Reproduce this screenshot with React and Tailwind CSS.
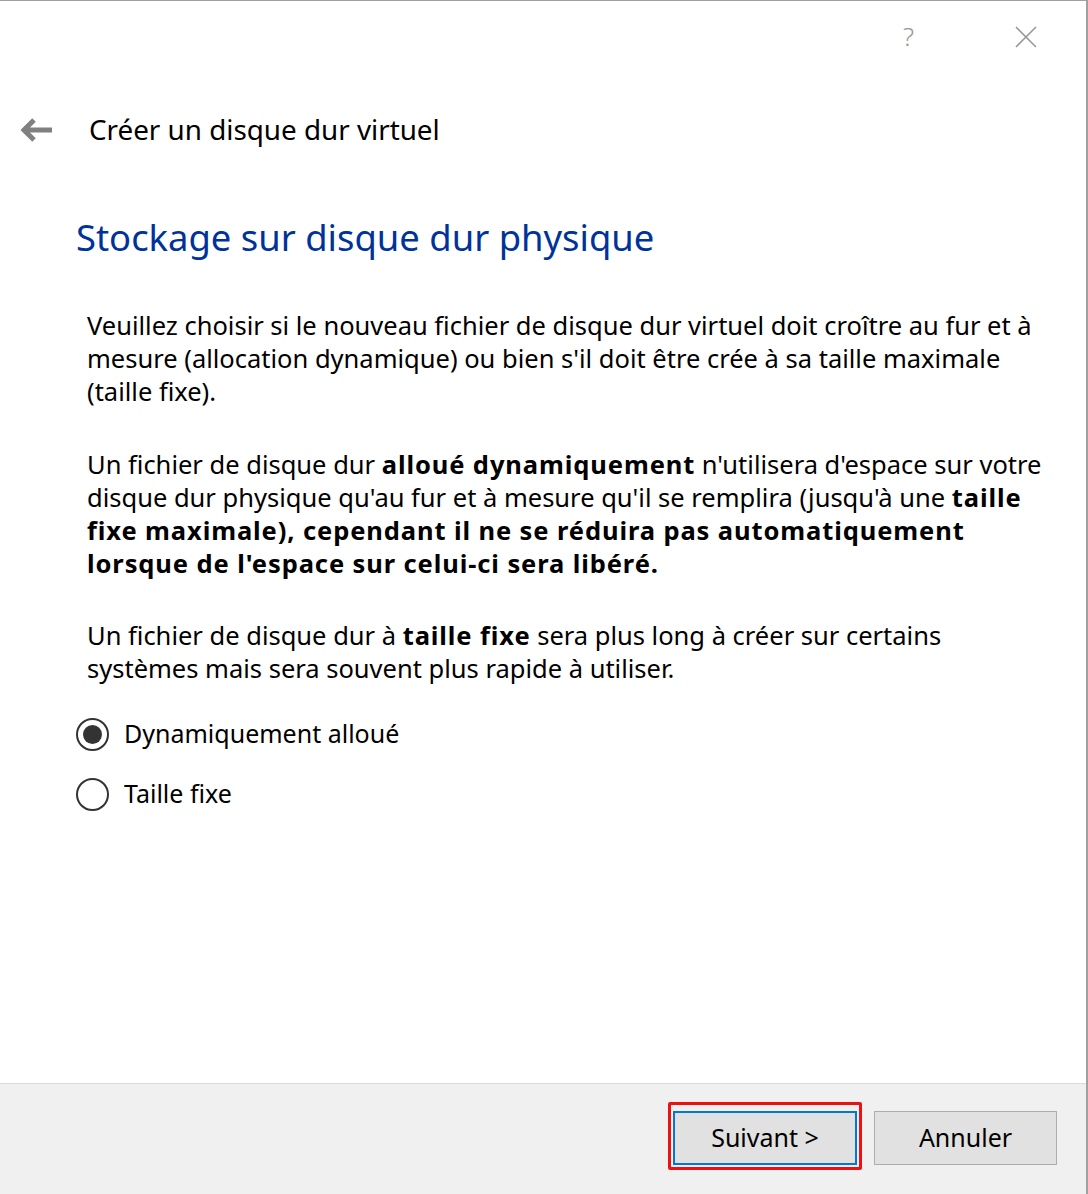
import React, { useState } from 'react';

const font = { fontFamily: '"Noto Sans", "Open Sans", sans-serif' };

function Radio({ checked, label, onSelect }) {
    return (
        <button onClick={onSelect} className="h-[60px] flex items-center gap-[15px] text-left">
            <span className="w-[33px] h-[33px] rounded-full border-2 border-[#333333] flex items-center justify-center bg-white">
                {checked && <span className="w-[19px] h-[19px] rounded-full bg-[#333333]" />}
            </span>
            <span className="text-[25px] text-black">{label}</span>
        </button>
    );
}

export default function App() {
    const [mode, setMode] = useState('dyn');
    const bold = 'font-bold tracking-[0.9px]';

    return (
        <div style={font} className="w-[1088px] h-[1194px] flex flex-col bg-white border-t border-[#a0a0a0] border-r-2 border-r-[#a0a0a0]">

            {/* barre de titre */}
            <div className="h-[71px] flex items-center justify-end pr-[48px] gap-[100px] text-[#999999]">
                <span className="text-[26px] font-light">?</span>
                <svg className="w-[24px] h-[24px]" viewBox="0 0 24 24" fill="none" stroke="#999999" strokeWidth="1.6">
                    <path d="M2 2L22 22M22 2L2 22" />
                </svg>
            </div>

            {/* en-tête */}
            <div className="h-[116px] flex items-center pl-[20px] gap-[37px]">
                <svg className="w-[32px] h-[24px]" viewBox="0 0 32 24" fill="none" stroke="#808080" strokeWidth="5">
                    <path d="M32 12H5M14 2L4 12L14 22" />
                </svg>
                <span className="text-[27.8px] text-black">Créer un disque dur virtuel</span>
            </div>

            {/* contenu */}
            <div className="pl-[76px] pr-[30px]">
                <h1 className="text-[36.4px] leading-[48px] text-[#003399] mt-[25px]">Stockage sur disque dur physique</h1>

                <div className="pl-[11px] text-[25.5px] leading-[33px] text-black whitespace-nowrap">
                    <p className="mt-[48px]">
                        Veuillez choisir si le nouveau fichier de disque dur virtuel doit croître au fur et à<br />
                        mesure (allocation dynamique) ou bien s'il doit être crée à sa taille maximale<br />
                        (taille fixe).
                    </p>
                    <p className="mt-[40px]">
                        Un fichier de disque dur <b className={bold}>alloué dynamiquement</b> n'utilisera d'espace sur votre<br />
                        disque dur physique qu'au fur et à mesure qu'il se remplira (jusqu'à une <b className={bold}>taille<br />
                        fixe maximale), cependant il ne se réduira pas automatiquement<br />
                        lorsque de l'espace sur celui-ci sera libéré.</b>
                    </p>
                    <p className="mt-[39px]">
                        Un fichier de disque dur à <b className={bold}>taille fixe</b> sera plus long à créer sur certains<br />
                        systèmes mais sera souvent plus rapide à utiliser.
                    </p>
                </div>

                <div className="mt-[19px] flex flex-col items-start">
                    <Radio checked={mode === 'dyn'} label="Dynamiquement alloué" onSelect={() => setMode('dyn')} />
                    <Radio checked={mode === 'fix'} label="Taille fixe" onSelect={() => setMode('fix')} />
                </div>
            </div>

            <div className="flex-1" />

            {/* pied */}
            <div className="h-[111px] bg-[#f0f0f0] border-t border-[#dadada] flex items-start justify-end pt-[27px] pr-[29px] gap-[17px]">
                <div className="relative">
                    <div className="absolute left-[-5px] top-[-9px] right-[-5px] bottom-[-5px] border-[3px] border-[#ee1111] rounded-[2px] pointer-events-none" />
                    <button className="w-[184px] h-[54px] bg-[#e1e1e1] border-2 border-[#0078d7] text-[25px] text-black">Suivant &gt;</button>
                </div>
                <button className="w-[183px] h-[54px] bg-[#e1e1e1] border border-[#adadad] text-[25px] text-black">Annuler</button>
            </div>
        </div>
    );
}
